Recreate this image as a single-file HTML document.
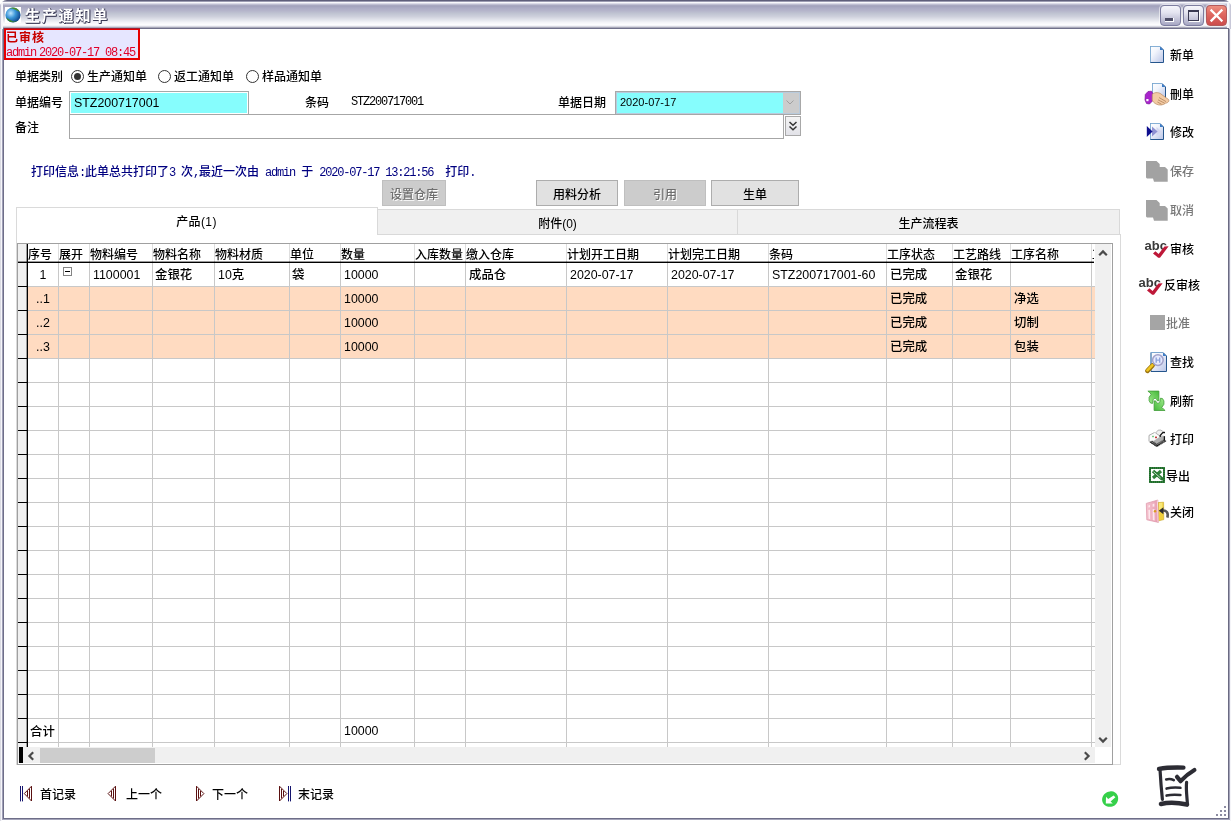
<!DOCTYPE html>
<html lang="zh-CN">
<head>
<meta charset="utf-8">
<title>生产通知单</title>
<style>
*{box-sizing:border-box;margin:0;padding:0}
html,body{width:1231px;height:821px;overflow:hidden;background:#fff}
body{will-change:transform;font-weight:500;position:relative;font-family:"Liberation Sans","Noto Sans CJK SC",sans-serif;font-size:12px;color:#000;line-height:1}
.a{position:absolute}
.t{position:absolute;white-space:pre;line-height:14px;height:14px;font-size:12px}
.l{font-family:"Liberation Mono",monospace;font-size:12px;letter-spacing:-1.2px;font-weight:400}
.mono{font-family:"Liberation Mono","Noto Sans CJK SC",monospace}
/* window frame */
#titlebar{left:0;top:0;width:1231px;height:29px;border-radius:7px 7px 0 0;overflow:hidden;
 background:linear-gradient(to bottom,#5e5e7a 0px,#5e5e7a 1px,#9c9cb2 1px,#9c9cb2 2px,#f8f8fc 2px,#f8f8fc 3px,#dcdce8 3.5px,#bebed2 4.5px,#a8a8c0 5.5px,#a4a4be 6.5px,#ababc4 8px,#b4b4ca 10.5px,#c0c4d2 13.5px,#ced0dc 16.5px,#e0e2ea 19.5px,#f4f4f8 22.5px,#fcfcfe 24.5px,#f4f4f8 25.5px,#d8d8e2 26.5px,#a8a8b8 27.5px,#70708a 28px,#70708a 29px)}
#title{left:25px;top:5.5px;font-size:15px;font-weight:bold;color:#fff;line-height:20px;height:20px;white-space:pre;
 text-shadow:1px 1px 0 #3c3c58,0 1px 0 #4a4a64,1px 0 0 #55556e;letter-spacing:1.8px}
.cb{top:5px;width:21px;height:21px;border-radius:4px;border:1px solid #7d7da0;
 background:linear-gradient(to bottom,#f6f6fb 0%,#e4e4f0 35%,#b6b6ce 85%,#a6a6c2 100%);box-shadow:0 0 0 1px rgba(255,255,255,.55)}
#cbx{background:linear-gradient(to bottom,#ee9080 0%,#e06a62 40%,#cc4c4c 100%);border-color:#b45a5a}
/* form */
.rd{width:13px;height:13px;border-radius:50%;border:1px solid #333;background:#fff}
.inp{border:1px solid #a3a9a9;background:#fff}
.btn{border:1px solid #adadad;background:#e1e1e1;text-align:center;line-height:24px;height:26px;top:180px;font-size:12px;padding-top:2px}
.btn.dis{background:#cccccc;border-color:#bfbfbf;color:#6e6e6e;text-shadow:1px 1px 0 #fff}
.tab{top:209px;height:26px;background:#f0f0f0;border:1px solid #d9d9d9;text-align:center;line-height:26px;padding-top:1px}
/* grid */
#grid{left:17px;top:243px;width:1096px;height:522px;border:1px solid #a0a0a0;background:#fff;overflow:hidden}
.vl{position:absolute;top:0;width:1px;height:503px;background:#c8c8c8}
.hl{position:absolute;left:10px;width:1067px;height:1px;background:#c8c8c8}
.rh{position:absolute;left:0;width:9px;height:1px;background:#000}
.orow{position:absolute;left:10px;width:1067px;height:23px;background:#ffdbc1}
.h{position:absolute;top:4px;white-space:pre;line-height:14px;font-size:12px}
.c{position:absolute;white-space:pre;line-height:14px;font-size:12.4px}
/* toolbar */
.tb{position:absolute;white-space:pre;line-height:14px;font-size:12px;left:1170px}
.tb.dis{color:#787878}
</style>
</head>
<body>
<!-- ===== window frame ===== -->
<div class="a" style="left:0;top:8px;width:1px;height:813px;background:#dcdce4"></div>
<div class="a" style="left:1px;top:8px;width:1px;height:813px;background:#f6f6fa"></div>
<div class="a" style="left:2px;top:8px;width:1px;height:811px;background:#a0a0b8"></div>
<div class="a" style="left:3px;top:8px;width:1px;height:811px;background:#6e6e88"></div>
<div class="a" style="left:1228px;top:8px;width:1px;height:811px;background:#6a6a82"></div>
<div class="a" style="left:1229px;top:8px;width:1px;height:812px;background:#a4a4ba"></div>
<div class="a" style="left:1230px;top:8px;width:1px;height:813px;background:#f4f4f8"></div>
<div class="a" style="left:3px;top:818px;width:1226px;height:1px;background:#6e6e88"></div>
<div class="a" style="left:2px;top:819px;width:1228px;height:1px;background:#a4a4ba"></div>
<div class="a" id="titlebar">
 <div class="a" style="left:0;top:3px;width:3px;height:26px;background:linear-gradient(to right,#c6c6d6 0,#c6c6d6 1px,#f2f2f8 1px,#f8f8fc 3px)"></div>
 <div class="a" style="left:1229px;top:3px;width:2px;height:26px;background:linear-gradient(to right,#e0e0ea 0,#e0e0ea 1px,#c8c8d8 1px)"></div><div class="a" style="left:1227px;top:3px;width:2px;height:25px;background:linear-gradient(to right,#f6f6fa 0,#f6f6fa 2px,#e0e0ea 2px,#e0e0ea 3px,#c8c8d8 3px)"></div>
</div>
<!-- app icon -->
<svg class="a" style="left:5px;top:6.5px" width="16" height="16" viewBox="0 0 16 16">
 <defs>
  <radialGradient id="gl" cx="35%" cy="38%" r="70%"><stop offset="0" stop-color="#bfe6ff"/><stop offset=".45" stop-color="#3b96d8"/><stop offset="1" stop-color="#0b3f86"/></radialGradient>
 </defs>
 <rect width="16" height="16" fill="#fff"/>
 <circle cx="8" cy="8" r="7.6" fill="url(#gl)"/>
 <path d="M4.6 1.2C8 -0.6 13.4 1 15.2 5.6C13.6 3.6 11.6 3.6 10 2.4C8.2 1.6 6.4 1.4 4.6 1.2Z" fill="#4d8f2b"/>
 <path d="M1.2 10.5 C3 12.2 5.5 12.6 7.4 14.2 C9 14.8 11 14.6 12.6 13.6 C10 16.4 3.4 16 1.2 10.5Z" fill="#3f8a2a"/>
</svg>
<div class="a" id="title">生产通知单</div>
<!-- caption buttons -->
<div class="a cb" style="left:1160px"><div class="a" style="left:4px;top:12px;width:9px;height:4px;background:#fff"></div><div class="a" style="left:4px;top:12px;width:8px;height:3px;background:#4e4e68"></div></div>
<div class="a cb" style="left:1183px"><div class="a" style="left:4px;top:4px;width:11px;height:11px;border:1px solid #3a3a52;border-top-width:2px;background:transparent;box-shadow:1px 1px 0 #fff"></div></div>
<div class="a cb" id="cbx" style="left:1206px">
 <svg class="a" style="left:0;top:0" width="19" height="19" viewBox="0 0 19 19"><path d="M4.5 4.5L14.5 14.5M14.5 4.5L4.5 14.5" stroke="#fff" stroke-width="2.3" stroke-linecap="square"/></svg>
</div>

<!-- ===== status box ===== -->
<div class="a" style="left:4px;top:28px;width:136px;height:32px;border:2px solid #e60000;background:#e6e6ff"></div>
<div class="a" style="left:4px;top:28px;width:136px;height:1px;background:rgba(70,70,110,.45)"></div>
<div class="t" style="left:6px;top:31px;color:#c80000;font-weight:bold;letter-spacing:1px">已审核</div>
<div class="t mono" style="left:6px;top:46px;color:#e0002a;font-size:12px;letter-spacing:-1.2px">admin<span style="margin-left:3px">2020-07-17 08:45</span></div>

<!-- ===== form ===== -->
<div class="t" style="left:15px;top:70px">单据类别</div>
<div class="t" style="left:87px;top:70px">生产通知单</div>
<div class="t" style="left:174px;top:70px">返工通知单</div>
<div class="t" style="left:262px;top:70px">样品通知单</div>
<div class="a rd" style="left:71px;top:70px"><div class="a" style="left:2px;top:2px;width:7px;height:7px;border-radius:50%;background:#333"></div></div>
<div class="a rd" style="left:158px;top:70px"></div>
<div class="a rd" style="left:246px;top:70px"></div>
<div class="t" style="left:15px;top:96px">单据编号</div>
<div class="t" style="left:15px;top:121px">备注</div>
<div class="a inp" style="left:69px;top:91px;width:180px;height:24px;border-color:#a3a9a9"><div class="a" style="left:1px;top:1px;right:1px;bottom:1px;background:#86fdfd"></div></div>
<div class="t" style="left:74px;top:96px;font-size:12.4px">STZ200717001</div>
<div class="t" style="left:305px;top:96px">条码</div>
<div class="t mono" style="left:351px;top:95px;font-size:12px;letter-spacing:-1.2px;font-weight:400">STZ200717001</div>
<div class="t" style="left:558px;top:96px">单据日期</div>
<div class="a" style="left:615px;top:91px;width:186px;height:24px;border:1px solid #a8a8a8;background:#b9cbdc"><div class="a" style="left:1px;top:1px;width:166px;height:20px;background:#86fdfd"></div><div class="a" style="left:167px;top:1px;width:16px;height:20px;background:#cccccc"></div>
 <svg class="a" style="left:169px;top:7px" width="10" height="7" viewBox="0 0 10 7"><path d="M1.5 1.5L5 5L8.5 1.5" fill="none" stroke="#a0a0a0" stroke-width="1"/></svg></div>
<div class="t" style="left:620px;top:95px;font-size:11px">2020-07-17</div>
<div class="a inp" style="left:69px;top:114px;width:715px;height:25px;border-color:#a6a6a6"></div>
<div class="a" style="left:785px;top:116px;width:16px;height:20px;border:1px solid #a8a8a8;background:linear-gradient(to bottom,#f4f4f4,#e2e2e8)">
 <svg class="a" style="left:2px;top:4px" width="10" height="11" viewBox="0 0 10 11"><path d="M1.5 1L5 4.2L8.5 1M1.5 5.5L5 8.7L8.5 5.5" fill="none" stroke="#333" stroke-width="1.5"/></svg></div>

<div class="t" style="left:31px;top:165px;color:#000080" id="pinfo">打印信息<span class="l">:</span>此单总共打印了<span class="l">3 </span>次<span class="l">,</span>最近一次由<span class="l"> admin </span>于<span class="l"> 2020-07-17 13:21:56  </span>打印<span class="l">.</span></div>

<div class="a btn dis" style="left:382px;width:64px">设置仓库</div>
<div class="a btn" style="left:536px;width:82px">用料分析</div>
<div class="a btn dis" style="left:624px;width:82px">引用</div>
<div class="a btn" style="left:711px;width:88px">生单</div>

<!-- ===== tabs ===== -->
<div class="a" style="left:16px;top:207px;width:1105px;height:558px;border:1px solid #dadada;border-top:none;border-right:none"></div><div class="a" style="left:1120px;top:234px;width:1px;height:531px;background:#dadada"></div>
<div class="a" style="left:16px;top:207px;width:362px;height:1px;background:#dadada"></div>
<div class="a" style="left:377px;top:207px;width:1px;height:2px;background:#dadada"></div>
<div class="a tab" style="left:377px;width:361px">附件(0)</div>
<div class="a tab" style="left:737px;width:383px">生产流程表</div>
<div class="t" style="left:16px;top:215px;width:361px;text-align:center;letter-spacing:.4px">产品(1)</div>

<!-- ===== grid ===== -->
<div class="a" id="grid">
<div class="a" style="left:0;top:0;width:9px;height:503px;background:#f0f0f0"></div>
<div class="orow" style="top:43px"></div>
<div class="orow" style="top:67px"></div>
<div class="orow" style="top:91px"></div>
<div class="hl" style="top:42px"></div>
<div class="rh" style="top:42px"></div>
<div class="hl" style="top:66px"></div>
<div class="rh" style="top:66px"></div>
<div class="hl" style="top:90px"></div>
<div class="rh" style="top:90px"></div>
<div class="hl" style="top:114px"></div>
<div class="rh" style="top:114px"></div>
<div class="hl" style="top:138px"></div>
<div class="rh" style="top:138px"></div>
<div class="hl" style="top:162px"></div>
<div class="rh" style="top:162px"></div>
<div class="hl" style="top:186px"></div>
<div class="rh" style="top:186px"></div>
<div class="hl" style="top:210px"></div>
<div class="rh" style="top:210px"></div>
<div class="hl" style="top:234px"></div>
<div class="rh" style="top:234px"></div>
<div class="hl" style="top:258px"></div>
<div class="rh" style="top:258px"></div>
<div class="hl" style="top:282px"></div>
<div class="rh" style="top:282px"></div>
<div class="hl" style="top:306px"></div>
<div class="rh" style="top:306px"></div>
<div class="hl" style="top:330px"></div>
<div class="rh" style="top:330px"></div>
<div class="hl" style="top:354px"></div>
<div class="rh" style="top:354px"></div>
<div class="hl" style="top:378px"></div>
<div class="rh" style="top:378px"></div>
<div class="hl" style="top:402px"></div>
<div class="rh" style="top:402px"></div>
<div class="hl" style="top:426px"></div>
<div class="rh" style="top:426px"></div>
<div class="hl" style="top:450px"></div>
<div class="rh" style="top:450px"></div>
<div class="hl" style="top:474px"></div>
<div class="rh" style="top:474px"></div>
<div class="hl" style="top:498px"></div>
<div class="rh" style="top:498px"></div>
<div class="vl" style="left:40px"></div>
<div class="vl" style="left:71px"></div>
<div class="vl" style="left:134px"></div>
<div class="vl" style="left:196px"></div>
<div class="vl" style="left:271px"></div>
<div class="vl" style="left:322px"></div>
<div class="vl" style="left:396px"></div>
<div class="vl" style="left:447px"></div>
<div class="vl" style="left:548px"></div>
<div class="vl" style="left:649px"></div>
<div class="vl" style="left:750px"></div>
<div class="vl" style="left:868px"></div>
<div class="vl" style="left:934px"></div>
<div class="vl" style="left:992px"></div>
<div class="vl" style="left:1073px"></div>
<div class="a" style="left:40px;top:0;width:1px;height:17px;background:#dedede"></div>
<div class="a" style="left:71px;top:0;width:1px;height:17px;background:#dedede"></div>
<div class="a" style="left:134px;top:0;width:1px;height:17px;background:#dedede"></div>
<div class="a" style="left:196px;top:0;width:1px;height:17px;background:#dedede"></div>
<div class="a" style="left:271px;top:0;width:1px;height:17px;background:#dedede"></div>
<div class="a" style="left:322px;top:0;width:1px;height:17px;background:#dedede"></div>
<div class="a" style="left:396px;top:0;width:1px;height:17px;background:#dedede"></div>
<div class="a" style="left:447px;top:0;width:1px;height:17px;background:#dedede"></div>
<div class="a" style="left:548px;top:0;width:1px;height:17px;background:#dedede"></div>
<div class="a" style="left:649px;top:0;width:1px;height:17px;background:#dedede"></div>
<div class="a" style="left:750px;top:0;width:1px;height:17px;background:#dedede"></div>
<div class="a" style="left:868px;top:0;width:1px;height:17px;background:#dedede"></div>
<div class="a" style="left:934px;top:0;width:1px;height:17px;background:#dedede"></div>
<div class="a" style="left:992px;top:0;width:1px;height:17px;background:#dedede"></div>
<div class="a" style="left:1073px;top:0;width:1px;height:17px;background:#dedede"></div>
<div class="a" style="left:9px;top:0;width:1px;height:503px;background:#000"></div>
<div class="a" style="left:8px;top:0;width:1px;height:503px;background:rgba(0,0,0,.35)"></div>
<div class="a" style="left:0;top:18px;width:1076px;height:1px;background:#000"></div>
<div class="a" style="left:0;top:17px;width:1076px;height:1px;background:rgba(0,0,0,.4)"></div>
<div class="h" style="left:10px">序号</div>
<div class="h" style="left:41px">展开</div>
<div class="h" style="left:72px">物料编号</div>
<div class="h" style="left:135px">物料名称</div>
<div class="h" style="left:197px">物料材质</div>
<div class="h" style="left:272px">单位</div>
<div class="h" style="left:323px">数量</div>
<div class="h" style="left:397px">入库数量</div>
<div class="h" style="left:448px">缴入仓库</div>
<div class="h" style="left:549px">计划开工日期</div>
<div class="h" style="left:650px">计划完工日期</div>
<div class="h" style="left:751px">条码</div>
<div class="h" style="left:869px">工序状态</div>
<div class="h" style="left:935px">工艺路线</div>
<div class="h" style="left:993px">工序名称</div>
<div class="h" style="left:1074px;width:2px;overflow:hidden">工</div>
<div class="c" style="left:10px;top:24px;width:30px;text-align:center">1</div>
<div class="a" style="left:45px;top:23px;width:9px;height:9px;border:1px solid #848484;background:#fff"><div class="a" style="left:1px;top:3px;width:5px;height:1px;background:#000"></div></div>
<div class="c" style="left:75px;top:24px">1100001</div>
<div class="c" style="left:137px;top:24px">金银花</div>
<div class="c" style="left:200px;top:24px">10克</div>
<div class="c" style="left:274px;top:24px">袋</div>
<div class="c" style="left:326px;top:24px">10000</div>
<div class="c" style="left:451px;top:24px">成品仓</div>
<div class="c" style="left:552px;top:24px">2020-07-17</div>
<div class="c" style="left:653px;top:24px">2020-07-17</div>
<div class="c" style="left:754px;top:24px">STZ200717001-60</div>
<div class="c" style="left:872px;top:24px">已完成</div>
<div class="c" style="left:937px;top:24px">金银花</div>
<div class="c" style="left:10px;top:48px;width:30px;text-align:center">..1</div>
<div class="c" style="left:326px;top:48px">10000</div>
<div class="c" style="left:872px;top:48px">已完成</div>
<div class="c" style="left:996px;top:48px">净选</div>
<div class="c" style="left:10px;top:72px;width:30px;text-align:center">..2</div>
<div class="c" style="left:326px;top:72px">10000</div>
<div class="c" style="left:872px;top:72px">已完成</div>
<div class="c" style="left:996px;top:72px">切制</div>
<div class="c" style="left:10px;top:96px;width:30px;text-align:center">..3</div>
<div class="c" style="left:326px;top:96px">10000</div>
<div class="c" style="left:872px;top:96px">已完成</div>
<div class="c" style="left:996px;top:96px">包装</div>
<div class="c" style="left:12px;top:481px">合计</div>
<div class="c" style="left:326px;top:480px">10000</div>
<div class="a" style="left:1077px;top:0;width:16px;height:503px;background:#f0f0f0"></div>
<svg class="a" style="left:1080px;top:5px" width="10" height="8" viewBox="0 0 10 8"><path d="M1.2 6.2L5 2.4L8.8 6.2" fill="none" stroke="#4a4a4a" stroke-width="2.2"/></svg>
<svg class="a" style="left:1080px;top:492px" width="10" height="8" viewBox="0 0 10 8"><path d="M1.2 1.8L5 5.6L8.8 1.8" fill="none" stroke="#4a4a4a" stroke-width="2.2"/></svg>
<div class="a" style="left:0;top:503px;width:1077px;height:16px;background:#f0f0f0"></div>
<div class="a" style="left:1px;top:503px;width:4px;height:16px;background:#000"></div>
<div class="a" style="left:22px;top:504px;width:115px;height:15px;background:#cdcdcd"></div>
<svg class="a" style="left:9px;top:507px" width="8" height="10" viewBox="0 0 8 10"><path d="M6.2 1.2L2.4 5L6.2 8.8" fill="none" stroke="#4a4a4a" stroke-width="2.2"/></svg>
<svg class="a" style="left:1065px;top:507px" width="8" height="10" viewBox="0 0 8 10"><path d="M1.8 1.2L5.6 5L1.8 8.8" fill="none" stroke="#4a4a4a" stroke-width="2.2"/></svg>
</div>

<!-- ===== nav ===== -->
<svg class="a" style="left:19px;top:785px" width="15" height="18" viewBox="0 0 15 18">
 <path d="M1.5 1v15.4M3.5 1v15.4" stroke="#14146e" stroke-width="1"/>
 <path d="M12.5 1.2L5.3 8.6L12.5 16Z" fill="#fff" stroke="#5a1010" stroke-width="1"/>
 <path d="M8.5 6v5.4M10.5 4v9.4" stroke="#5a1010" stroke-width="1"/></svg>
<svg class="a" style="left:106px;top:785px" width="12" height="18" viewBox="0 0 12 18">
 <path d="M9.5 1.2L2.1 8.6L9.5 16Z" fill="#fff" stroke="#5a1010" stroke-width="1"/>
 <path d="M5.5 6v5.4M7.5 4v9.4" stroke="#5a1010" stroke-width="1"/></svg>
<svg class="a" style="left:194px;top:785px" width="12" height="18" viewBox="0 0 12 18">
 <path d="M2.5 1.2L9.9 8.6L2.5 16Z" fill="#fff" stroke="#5a1010" stroke-width="1"/>
 <path d="M6.5 6v5.4M4.5 4v9.4" stroke="#5a1010" stroke-width="1"/></svg>
<svg class="a" style="left:277px;top:785px" width="16" height="18" viewBox="0 0 16 18">
 <path d="M2.5 1.2L9.9 8.6L2.5 16Z" fill="#fff" stroke="#5a1010" stroke-width="1"/>
 <path d="M6.5 6v5.4M4.5 4v9.4" stroke="#5a1010" stroke-width="1"/>
 <path d="M11.5 1v15.4M13.5 1v15.4" stroke="#14146e" stroke-width="1"/></svg>
<div class="t" style="left:40px;top:788px">首记录</div>
<div class="t" style="left:126px;top:788px">上一个</div>
<div class="t" style="left:212px;top:788px">下一个</div>
<div class="t" style="left:298px;top:788px">末记录</div>

<!-- ===== toolbar ===== -->
<svg class="a" style="left:1136px;top:40px" width="70" height="490" viewBox="1136 40 70 490">
 <defs>
  <linearGradient id="pg" x1="0" y1="0" x2="1" y2="1"><stop offset="0" stop-color="#ffffff"/><stop offset=".35" stop-color="#f2f5fc"/><stop offset="1" stop-color="#b9c4e6"/></linearGradient>
  <linearGradient id="gr" x1="0" y1="1" x2="1" y2="0"><stop offset="0" stop-color="#a4ee90"/><stop offset="1" stop-color="#44b83a"/></linearGradient>
  <linearGradient id="dr" x1="0" y1="0" x2="1" y2="0"><stop offset="0" stop-color="#f6c4d0"/><stop offset="1" stop-color="#e79cb0"/></linearGradient>
 </defs>
 <!-- 新单 -->
 <g transform="translate(1150 46)"><path d="M0.5 0.5H10L13.5 4V16.5H0.5Z" fill="url(#pg)" stroke="#24558c"/><path d="M0.5 16V0.5H10" fill="none" stroke="#86b0d6"/><path d="M10 0.6V4H13.4Z" fill="#3c7cc6"/></g>
 <!-- 删单 -->
 <g transform="translate(1152 83)"><path d="M0.5 0.5H10L13.5 4V16.5H0.5Z" fill="url(#pg)" stroke="#24558c"/><path d="M0.5 16V0.5H10" fill="none" stroke="#86b0d6"/><path d="M10 0.6V4H13.4Z" fill="#3c7cc6"/></g>
 <path d="M1145.3 94.5L1148 91.5L1151.5 91.2L1153 94L1152.4 101L1149.5 104L1146.5 103.5L1145 100Z" fill="#a822cc" stroke="#7a1496" stroke-width=".7"/>
 <rect x="1146.3" y="99" width="2.2" height="2.2" fill="#fff"/>
 <path d="M1152.3 94.2C1155 91.8 1159.5 92.2 1162 94.8L1168.6 99.5C1169.6 101.5 1167.5 103 1165.5 103.2C1163.5 105.2 1159 105.6 1156.5 104.2C1154.2 103.2 1152.8 101.6 1152.2 100Z" fill="#f3cba4" stroke="#b98a62" stroke-width=".7"/>
 <path d="M1159 97.5L1166 101.6M1158 99.8L1164.6 103.2M1157.4 102L1161.5 104.2" stroke="#a87850" stroke-width=".7" fill="none"/>
 <!-- 修改 -->
 <g transform="translate(1150 123)"><path d="M0.5 0.5H10L13.5 4V16.5H0.5Z" fill="url(#pg)" stroke="#24558c"/><path d="M0.5 16V0.5H10" fill="none" stroke="#86b0d6"/><path d="M10 0.6V4H13.4Z" fill="#3c7cc6"/></g>
 <path d="M1156.5 127L1161.5 131.5L1156.5 136Z" fill="#d4d6f0"/>
 <path d="M1152 126.5L1157.6 131.5L1152 136.5Z" fill="#8f92d2"/>
 <path d="M1146.8 126L1152.6 131.5L1146.8 137Z" fill="#0e0e8e"/>
 <!-- 保存 / 取消 (disabled) -->
 <g transform="translate(1146 161)"><path d="M0 0H10.5L13.7 3V6H19L21.7 8.6V20.7H8L7 17.5H1L0 16.5Z" fill="#a2a2a2"/></g>
 <g transform="translate(1146 200)"><path d="M0 0H10.5L13.7 3V6H19L21.7 8.6V20.7H8L7 17.5H1L0 16.5Z" fill="#a2a2a2"/></g>
 <!-- 审核 -->
 <text x="1144.6" y="250.2" font-family="'Liberation Sans',sans-serif" style="font-weight:700" font-size="13" fill="#3a3a3a">abc</text>
 <path d="M1153 253.4L1155.4 251.2L1158.6 254L1164.4 246.6L1168.6 246.2L1160 257.8L1158.2 257.8Z" fill="#be1838"/>
 <!-- 反审核 -->
 <text x="1138.6" y="287.2" font-family="'Liberation Sans',sans-serif" style="font-weight:700" font-size="13" fill="#3a3a3a">abc</text>
 <path d="M1147 290.4L1149.4 288.2L1152.6 291L1158.4 283.6L1162.6 283.2L1154 294.8L1152.2 294.8Z" fill="#be1838"/>
 <!-- 批准 (disabled) -->
 <rect x="1150" y="315" width="15" height="15" fill="#a5a5a5"/>
 <!-- 查找 -->
 <g transform="translate(1150.5 352)"><path d="M0.5 0.5H12.5L16 4V19.5H0.5Z" fill="url(#pg)" stroke="#24558c"/><path d="M0.5 19V0.5H12.5" fill="none" stroke="#7aa6cf"/><path d="M12.5 0.6V4H15.9Z" fill="#3c7cc6"/></g>
 <path d="M1152.6 365.4L1147.4 370.8" stroke="#9a7410" stroke-width="4.6" stroke-linecap="round"/>
 <path d="M1152.4 365.2L1147.4 370.4" stroke="#f0c622" stroke-width="2.6" stroke-linecap="round"/>
 <circle cx="1157.9" cy="360.1" r="5.3" fill="#e6eafd" stroke="#a2a2ca" stroke-width="1.5"/>
 <path d="M1156.2 357.4V362.8M1159.7 357.4V362.8M1156.2 360.1H1159.7" stroke="#8fa4de" stroke-width="1.4" fill="none"/>
 <!-- 刷新 -->
 <path d="M1147.9 391.1H1158.9V400.7H1157.3C1156.6 399 1155.8 398.3 1154.9 398.3C1154 398.4 1153.5 399 1153.2 399.7L1152.5 403.4L1150.5 403L1149.1 400.7V397.3L1151.2 394.2L1149.5 392.5Z" fill="url(#gr)" stroke="#3f9c36" stroke-width=".8" stroke-linejoin="round"/>
 <path d="M1147.9 391.1H1158.9V400.7H1157.3C1156.6 399 1155.8 398.3 1154.9 398.3C1154 398.4 1153.5 399 1153.2 399.7L1152.5 403.4L1150.5 403L1149.1 400.7V397.3L1151.2 394.2L1149.5 392.5Z" fill="url(#gr)" stroke="#3f9c36" stroke-width=".8" stroke-linejoin="round" transform="rotate(180 1156.5 400.8)"/>
 <!-- 打印 -->
 <path d="M1149 435.4L1154.6 432.4L1164.6 436L1164.6 440.6L1156 445.6L1149 441.6Z" fill="#d8d8d8"/>
 <path d="M1149 435.4L1154.6 432.4L1160.4 436.4L1154.4 440.6L1149 441Z" fill="#fbfbfb"/>
 <path d="M1160.4 436.4L1164.6 436L1164.6 440.6L1156 445.6L1152 443.2L1154.4 440.6Z" fill="#b0b0b0"/>
 <path d="M1149 441.4V435.4L1154.6 432.4" fill="none" stroke="#9a9a9a" stroke-width=".8"/>
 <g fill="#101010"><rect x="1149.8" y="441.6" width="2" height="1.2"/><rect x="1151.2" y="442.6" width="2" height="1.2"/><rect x="1152.7" y="443.5" width="2" height="1.2"/><rect x="1154.1" y="444.5" width="2" height="1.2"/><rect x="1155.6" y="445.4" width="2" height="1.2"/><rect x="1156.6" y="445.0" width="2" height="1.2"/><rect x="1158.1" y="444.1" width="2" height="1.2"/><rect x="1159.6" y="443.2" width="2" height="1.2"/><rect x="1161.1" y="442.3" width="2" height="1.2"/><rect x="1162.6" y="441.4" width="2" height="1.2"/><rect x="1164.1" y="440.5" width="2" height="1.2"/></g>
 <g fill="#383838"><rect x="1151.4" y="440.9" width="1.7" height="1"/><rect x="1152.9" y="441.8" width="1.7" height="1"/><rect x="1154.3" y="442.8" width="1.7" height="1"/><rect x="1155.8" y="443.8" width="1.7" height="1"/><rect x="1156.8" y="443.4" width="1.7" height="1"/><rect x="1158.3" y="442.5" width="1.7" height="1"/><rect x="1159.8" y="441.6" width="1.7" height="1"/><rect x="1161.3" y="440.7" width="1.7" height="1"/><rect x="1162.8" y="439.8" width="1.7" height="1"/></g>
 <path d="M1155.6 433L1158.2 430.1L1160.8 430.1L1163.8 432L1159.8 435.8Z" fill="#f0f0f0" stroke="#9a9a9a" stroke-width=".7"/>
 <path d="M1165 432.5L1162.8 432.6L1160.2 435.4L1160.2 437" fill="none" stroke="#141414" stroke-width="1.3"/>
 <path d="M1164.4 436.2V440.6" stroke="#141414" stroke-width="1.3"/>
 <rect x="1155" y="436.6" width="2" height="1.6" fill="#c03a3a"/><rect x="1152.2" y="435.8" width="1.6" height="1.4" fill="#58c068"/>
 <!-- 导出 -->
 <rect x="1150" y="468" width="14" height="14" fill="#fff" stroke="#347f3e" stroke-width="2"/>
 <rect x="1150" y="468" width="14" height="14" fill="none" stroke="#1f6a2a" stroke-width="2" stroke-dasharray="1 1"/>
 <path d="M1161 471L1153 478" stroke="#2f8039" stroke-width="3.2"/>
 <path d="M1153 471L1161.6 478.6L1163.4 479" fill="none" stroke="#2a7a34" stroke-width="3.4" stroke-linejoin="round"/>
 <path d="M1153.6 471.8L1160.6 478" stroke="#e8f4e8" stroke-width=".8"/>
 <!-- 关闭 -->
 <path d="M1158 502.6L1163.6 502.2L1163.8 519.6L1158 521Z" fill="#f0cf3a" stroke="#c8a62a" stroke-width=".6"/>
 <path d="M1159 503L1162.4 502.8L1162.4 508L1159 510Z" fill="#f8e878"/>
 <path d="M1146.3 503.4L1157.8 500L1158.4 522.4L1146.8 519.8Z" fill="url(#dr)" stroke="#dc94a8" stroke-width=".7"/>
 <path d="M1148.4 505.4L1150 505L1150 507.2L1148.4 507.4ZM1152.6 504L1154.4 503.6L1154.4 506.6L1152.6 506.8ZM1148.4 510L1150 509.8L1150.2 519.2L1148.6 518.8ZM1152.6 509.2L1154.4 509L1154.6 520.4L1152.8 520Z" fill="#fde6ec"/>
 <path d="M1157.4 500.4L1158 522" stroke="#f8dce2" stroke-width=".9"/>
 <circle cx="1155" cy="511.2" r="1.2" fill="#dc9a1e"/>
 <path d="M1167.4 517.6C1168.6 512.6 1166.4 510.2 1162.4 510.6" fill="none" stroke="#585858" stroke-width="2.6"/>
 <path d="M1158.8 510.8L1163.4 507.2L1163.4 514.2Z" fill="#2e2e2e"/>
</svg>
<!-- bottom-right icons -->
<svg class="a" style="left:1100px;top:789px" width="20" height="20" viewBox="0 0 20 20">
 <path d="M10 2.4C13 1.6 16.4 3.6 17.6 6.6C19 10 17.8 14.4 14.6 16.4C11.4 18.6 6.6 18.2 4 15.4C1.4 12.6 1.6 8 4.2 5.2C5.8 3.4 8 2.6 10 2.4Z" fill="#36d04a"/>
 <path d="M13.6 6.4L15.4 8.2L10.6 12.4L12.8 14.4L5.8 14.6L6 7.8L8.2 10Z" fill="#fff"/>
</svg>
<svg class="a" style="left:1154px;top:763px" width="46" height="48" viewBox="1154 763 46 48">
 <g fill="none" stroke="#2c2c34" stroke-linecap="round" stroke-linejoin="round">
  <path d="M1159 768.8C1166 767.6 1176 767.4 1183.4 767.6" stroke-width="4.4"/>
  <path d="M1160 769.4C1160.6 780 1161.4 790 1162.4 799.4" stroke-width="3.2"/>
  <path d="M1161 804C1169 802 1179 802.8 1187 804.6" stroke-width="4.6"/>
  <path d="M1186.6 782.4C1185.8 789 1187 797 1187.4 803.6" stroke-width="3.2"/>
  <path d="M1177 776.8L1180.6 781.2C1184.6 776.8 1189.6 772.8 1194.4 770" stroke-width="4.2"/>
  <path d="M1166.2 779.4C1169 778.6 1172 779.2 1173.8 780.2" stroke-width="2.6"/>
  <path d="M1166.6 788.6C1171 787.4 1176 787.4 1180.4 787.8" stroke-width="2.6"/>
  <path d="M1166.6 795.6C1171 794.4 1176 794.6 1180.4 795" stroke-width="2.6"/>
 </g>
</svg>
<div class="tb" style="top:49px">新单</div>
<div class="tb" style="top:88px">刪单</div>
<div class="tb" style="top:126px">修改</div>
<div class="tb dis" style="top:165px">保存</div>
<div class="tb dis" style="top:204px">取消</div>
<div class="tb" style="top:243px">审核</div>
<div class="tb" style="top:279px;left:1164px">反审核</div>
<div class="tb dis" style="top:317px;left:1166px">批准</div>
<div class="tb" style="top:356px">查找</div>
<div class="tb" style="top:395px">刷新</div>
<div class="tb" style="top:433px">打印</div>
<div class="tb" style="top:470px;left:1166px">导出</div>
<div class="tb" style="top:506px">关闭</div>

<!-- resize grip -->
<div class="a" style="left:1224px;top:806px;width:2px;height:2px;background:#8c8ca2"></div>
<div class="a" style="left:1220px;top:810px;width:2px;height:2px;background:#8c8ca2"></div>
<div class="a" style="left:1224px;top:810px;width:2px;height:2px;background:#8c8ca2"></div>
<div class="a" style="left:1216px;top:814px;width:2px;height:2px;background:#8c8ca2"></div>
<div class="a" style="left:1220px;top:814px;width:2px;height:2px;background:#8c8ca2"></div>
<div class="a" style="left:1224px;top:814px;width:2px;height:2px;background:#8c8ca2"></div>
</body>
</html>
